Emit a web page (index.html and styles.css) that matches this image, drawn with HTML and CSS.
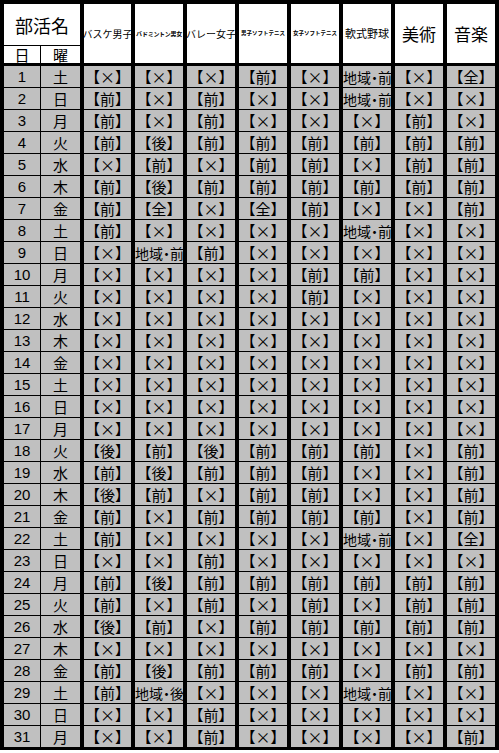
FILE: index.html
```html
<!DOCTYPE html>
<html lang="ja">
<head>
<meta charset="utf-8">
<title>部活動予定表</title>
<link rel="stylesheet" href="styles.css">
</head>
<body>
<div class="sheet">
  <div class="h title">部活名</div>
  <div class="h club n10">バスケ男子</div>
  <div class="h club n6">バドミントン男女</div>
  <div class="h club n10">バレー女子</div>
  <div class="h club n55">男子ソフトテニス</div>
  <div class="h club n55">女子ソフトテニス</div>
  <div class="h club n11">軟式野球</div>
  <div class="h club n17">美術</div>
  <div class="h club n17">音楽</div>
  <div class="h sub d">日</div>
  <div class="h sub w">曜</div>

  <div class="d">1</div><div class="w">土</div><div class="c">【×】</div><div class="c">【×】</div><div class="c">【×】</div><div class="c">【前】</div><div class="c">【×】</div><div class="c l">地域・前</div><div class="c">【×】</div><div class="c">【全】</div>
  <div class="d">2</div><div class="w">日</div><div class="c">【前】</div><div class="c">【×】</div><div class="c">【前】</div><div class="c">【×】</div><div class="c">【×】</div><div class="c l">地域・前</div><div class="c">【×】</div><div class="c">【×】</div>
  <div class="d">3</div><div class="w">月</div><div class="c">【前】</div><div class="c">【×】</div><div class="c">【前】</div><div class="c">【×】</div><div class="c">【×】</div><div class="c">【×】</div><div class="c">【前】</div><div class="c">【×】</div>
  <div class="d">4</div><div class="w">火</div><div class="c">【前】</div><div class="c">【後】</div><div class="c">【前】</div><div class="c">【前】</div><div class="c">【前】</div><div class="c">【前】</div><div class="c">【前】</div><div class="c">【前】</div>
  <div class="d">5</div><div class="w">水</div><div class="c">【×】</div><div class="c">【前】</div><div class="c">【×】</div><div class="c">【前】</div><div class="c">【前】</div><div class="c">【×】</div><div class="c">【前】</div><div class="c">【前】</div>
  <div class="d">6</div><div class="w">木</div><div class="c">【前】</div><div class="c">【後】</div><div class="c">【前】</div><div class="c">【前】</div><div class="c">【前】</div><div class="c">【前】</div><div class="c">【前】</div><div class="c">【前】</div>
  <div class="d">7</div><div class="w">金</div><div class="c">【前】</div><div class="c">【全】</div><div class="c">【×】</div><div class="c">【全】</div><div class="c">【前】</div><div class="c">【×】</div><div class="c">【×】</div><div class="c">【前】</div>
  <div class="d">8</div><div class="w">土</div><div class="c">【前】</div><div class="c">【×】</div><div class="c">【×】</div><div class="c">【×】</div><div class="c">【×】</div><div class="c l">地域・前</div><div class="c">【×】</div><div class="c">【×】</div>
  <div class="d">9</div><div class="w">日</div><div class="c">【×】</div><div class="c l">地域・前</div><div class="c">【前】</div><div class="c">【×】</div><div class="c">【×】</div><div class="c">【×】</div><div class="c">【×】</div><div class="c">【×】</div>
  <div class="d">10</div><div class="w">月</div><div class="c">【×】</div><div class="c">【×】</div><div class="c">【×】</div><div class="c">【×】</div><div class="c">【前】</div><div class="c">【前】</div><div class="c">【×】</div><div class="c">【×】</div>
  <div class="d">11</div><div class="w">火</div><div class="c">【×】</div><div class="c">【×】</div><div class="c">【×】</div><div class="c">【×】</div><div class="c">【前】</div><div class="c">【×】</div><div class="c">【×】</div><div class="c">【×】</div>
  <div class="d">12</div><div class="w">水</div><div class="c">【×】</div><div class="c">【×】</div><div class="c">【×】</div><div class="c">【×】</div><div class="c">【×】</div><div class="c">【×】</div><div class="c">【×】</div><div class="c">【×】</div>
  <div class="d">13</div><div class="w">木</div><div class="c">【×】</div><div class="c">【×】</div><div class="c">【×】</div><div class="c">【×】</div><div class="c">【×】</div><div class="c">【×】</div><div class="c">【×】</div><div class="c">【×】</div>
  <div class="d">14</div><div class="w">金</div><div class="c">【×】</div><div class="c">【×】</div><div class="c">【×】</div><div class="c">【×】</div><div class="c">【×】</div><div class="c">【×】</div><div class="c">【×】</div><div class="c">【×】</div>
  <div class="d">15</div><div class="w">土</div><div class="c">【×】</div><div class="c">【×】</div><div class="c">【×】</div><div class="c">【×】</div><div class="c">【×】</div><div class="c">【×】</div><div class="c">【×】</div><div class="c">【×】</div>
  <div class="d">16</div><div class="w">日</div><div class="c">【×】</div><div class="c">【×】</div><div class="c">【×】</div><div class="c">【×】</div><div class="c">【×】</div><div class="c">【×】</div><div class="c">【×】</div><div class="c">【×】</div>
  <div class="d">17</div><div class="w">月</div><div class="c">【×】</div><div class="c">【×】</div><div class="c">【×】</div><div class="c">【×】</div><div class="c">【×】</div><div class="c">【×】</div><div class="c">【×】</div><div class="c">【×】</div>
  <div class="d">18</div><div class="w">火</div><div class="c">【後】</div><div class="c">【前】</div><div class="c">【後】</div><div class="c">【前】</div><div class="c">【前】</div><div class="c">【前】</div><div class="c">【×】</div><div class="c">【前】</div>
  <div class="d">19</div><div class="w">水</div><div class="c">【前】</div><div class="c">【後】</div><div class="c">【前】</div><div class="c">【前】</div><div class="c">【前】</div><div class="c">【×】</div><div class="c">【×】</div><div class="c">【前】</div>
  <div class="d">20</div><div class="w">木</div><div class="c">【後】</div><div class="c">【前】</div><div class="c">【×】</div><div class="c">【前】</div><div class="c">【前】</div><div class="c">【×】</div><div class="c">【×】</div><div class="c">【前】</div>
  <div class="d">21</div><div class="w">金</div><div class="c">【前】</div><div class="c">【×】</div><div class="c">【前】</div><div class="c">【前】</div><div class="c">【前】</div><div class="c">【前】</div><div class="c">【×】</div><div class="c">【前】</div>
  <div class="d">22</div><div class="w">土</div><div class="c">【前】</div><div class="c">【×】</div><div class="c">【×】</div><div class="c">【×】</div><div class="c">【×】</div><div class="c l">地域・前</div><div class="c">【×】</div><div class="c">【全】</div>
  <div class="d">23</div><div class="w">日</div><div class="c">【×】</div><div class="c">【×】</div><div class="c">【前】</div><div class="c">【×】</div><div class="c">【×】</div><div class="c">【×】</div><div class="c">【×】</div><div class="c">【×】</div>
  <div class="d">24</div><div class="w">月</div><div class="c">【前】</div><div class="c">【後】</div><div class="c">【前】</div><div class="c">【前】</div><div class="c">【前】</div><div class="c">【前】</div><div class="c">【前】</div><div class="c">【前】</div>
  <div class="d">25</div><div class="w">火</div><div class="c">【前】</div><div class="c">【×】</div><div class="c">【前】</div><div class="c">【×】</div><div class="c">【前】</div><div class="c">【×】</div><div class="c">【前】</div><div class="c">【前】</div>
  <div class="d">26</div><div class="w">水</div><div class="c">【後】</div><div class="c">【前】</div><div class="c">【×】</div><div class="c">【前】</div><div class="c">【前】</div><div class="c">【前】</div><div class="c">【前】</div><div class="c">【前】</div>
  <div class="d">27</div><div class="w">木</div><div class="c">【×】</div><div class="c">【×】</div><div class="c">【×】</div><div class="c">【×】</div><div class="c">【×】</div><div class="c">【×】</div><div class="c">【×】</div><div class="c">【×】</div>
  <div class="d">28</div><div class="w">金</div><div class="c">【前】</div><div class="c">【後】</div><div class="c">【前】</div><div class="c">【前】</div><div class="c">【前】</div><div class="c">【×】</div><div class="c">【前】</div><div class="c">【前】</div>
  <div class="d">29</div><div class="w">土</div><div class="c">【前】</div><div class="c l">地域・後</div><div class="c">【×】</div><div class="c">【×】</div><div class="c">【×】</div><div class="c l">地域・前</div><div class="c">【×】</div><div class="c">【×】</div>
  <div class="d">30</div><div class="w">日</div><div class="c">【×】</div><div class="c">【×】</div><div class="c">【前】</div><div class="c">【×】</div><div class="c">【×】</div><div class="c">【×】</div><div class="c">【×】</div><div class="c">【×】</div>
  <div class="d last">31</div><div class="w last">月</div><div class="c last">【×】</div><div class="c last">【×】</div><div class="c last">【前】</div><div class="c last">【×】</div><div class="c last">【×】</div><div class="c last">【×】</div><div class="c last">【×】</div><div class="c last">【前】</div>
</div>
</body>
</html>
```

FILE: styles.css
```css
html, body {
  margin: 0;
  padding: 0;
  background: #fff;
}

body {
  font-family: "Liberation Sans", "Noto Sans CJK JP", sans-serif;
  color: #000;
}

.sheet {
  display: grid;
  grid-template-columns: 37px 43px 51px repeat(7, 52px);
  grid-template-rows: 42px 20px repeat(30, 22px) 24px;
  width: 499px;
  box-sizing: border-box;
  border-left: 4px solid #000;
  border-top: 4px solid #000;
}

.sheet > div {
  box-sizing: border-box;
  display: flex;
  align-items: center;
  justify-content: center;
  overflow: hidden;
  white-space: nowrap;
  line-height: 1;
  background: #c0c0c0;
  border-right: 4px solid #000;
  border-bottom: 1px solid #000;
  font-size: 15px;
}

.sheet > .h {
  background: #fff;
  font-family: "Noto Sans CJK JP", sans-serif;
}

.sheet > .title {
  grid-column: 1 / span 2;
  grid-row: 1;
  font-size: 18px;
}

.sheet > .club {
  grid-row: 1 / span 2;
  border-bottom-width: 3px;
}

.sheet > .sub {
  grid-row: 2;
  border-bottom-width: 3px;
  overflow: visible;
  line-height: 17px;
}

.sheet > .d {
  border-right-width: 1px;
}

.w, .c {
  font-family: "Noto Sans CJK JP", sans-serif;
}

.sheet > .c.l {
  justify-content: flex-start;
  font-feature-settings: "palt";
  font-size: 14px;
}

.sheet > .last {
  border-bottom-width: 3px;
}

.sheet > .n10 { font-size: 10px; }
.sheet > .n11 { font-size: 11px; }
.sheet > .n6 { font-size: 6px; letter-spacing: -0.3px; font-weight: 700; }
.sheet > .n55 { font-size: 5.5px; font-weight: 700; }
.sheet > .n17 { font-size: 17px; }
```
